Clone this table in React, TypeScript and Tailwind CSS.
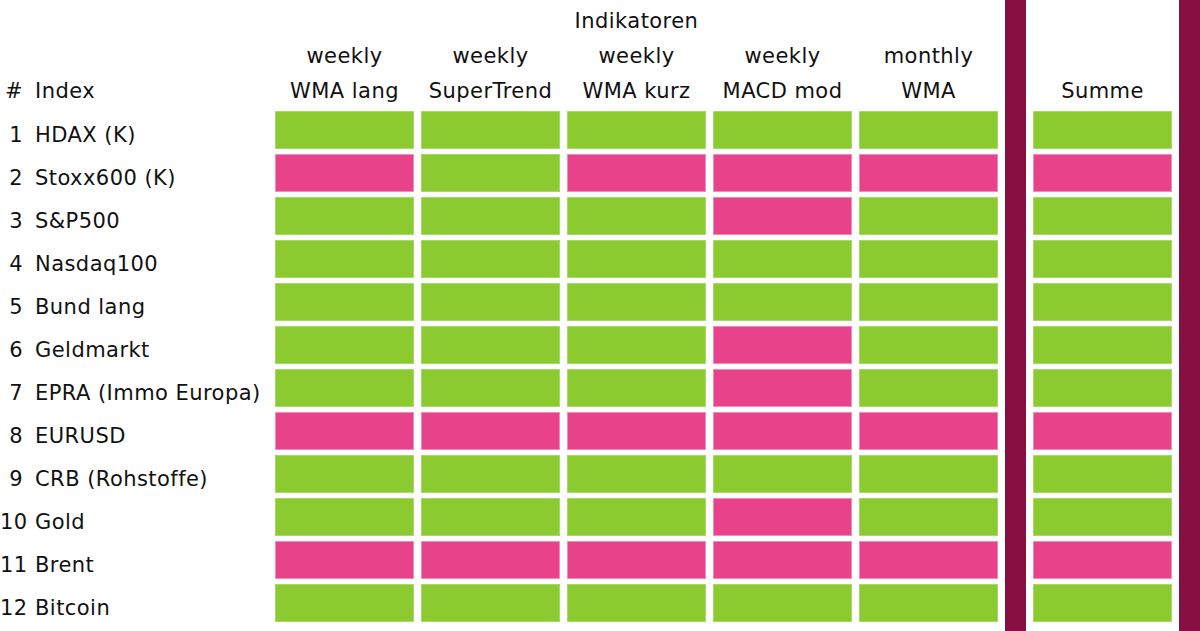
import React from 'react'

type Signal = 'g' | 'r'

type Row = {
	nr: number
	name: string
	cells: Signal[]
	sum: Signal
}

const rows: Row[] = [
	{ nr: 1, name: 'HDAX (K)', cells: ['g', 'g', 'g', 'g', 'g'], sum: 'g' },
	{ nr: 2, name: 'Stoxx600 (K)', cells: ['r', 'g', 'r', 'r', 'r'], sum: 'r' },
	{ nr: 3, name: 'S&P500', cells: ['g', 'g', 'g', 'r', 'g'], sum: 'g' },
	{ nr: 4, name: 'Nasdaq100', cells: ['g', 'g', 'g', 'g', 'g'], sum: 'g' },
	{ nr: 5, name: 'Bund lang', cells: ['g', 'g', 'g', 'g', 'g'], sum: 'g' },
	{ nr: 6, name: 'Geldmarkt', cells: ['g', 'g', 'g', 'r', 'g'], sum: 'g' },
	{ nr: 7, name: 'EPRA (Immo Europa)', cells: ['g', 'g', 'g', 'r', 'g'], sum: 'g' },
	{ nr: 8, name: 'EURUSD', cells: ['r', 'r', 'r', 'r', 'r'], sum: 'r' },
	{ nr: 9, name: 'CRB (Rohstoffe)', cells: ['g', 'g', 'g', 'g', 'g'], sum: 'g' },
	{ nr: 10, name: 'Gold', cells: ['g', 'g', 'g', 'r', 'g'], sum: 'g' },
	{ nr: 11, name: 'Brent', cells: ['r', 'r', 'r', 'r', 'r'], sum: 'r' },
	{ nr: 12, name: 'Bitcoin', cells: ['g', 'g', 'g', 'g', 'g'], sum: 'g' },
]

const columns = [
	['weekly', 'WMA lang'],
	['weekly', 'SuperTrend'],
	['weekly', 'WMA kurz'],
	['weekly', 'MACD mod'],
	['monthly', 'WMA'],
]

function Cell({ s }: { s: Signal }) {
	return (
		<div
			className={
				s === 'g'
					? 'bg-[#8bcb2f] border border-[#a6d86a]'
					: 'bg-[#e8438a] border border-[#f08db7]'
			}
		/>
	)
}

export default function App() {
	return (
		<div
			className="grid h-[631px] w-[1200px] bg-white text-[21px] tracking-[0.45px] text-[#111] grid-cols-[268px_repeat(5,139px)_21px_139px_21px] grid-rows-[106px_repeat(12,38px)_1fr] gap-x-[7px] gap-y-[5px]"
			style={{ fontFamily: '"DejaVu Sans", sans-serif' }}
		>
			{/* header */}
			<div className="col-start-1 row-start-1 self-end flex items-center leading-[35px] mb-[-3px]">
				<span className="w-[23px] text-right">#</span>
				<span className="ml-[12px]">Index</span>
			</div>
			<div className="col-start-2 col-span-5 row-start-1 self-start text-center leading-[35px] pt-[4px]">
				Indikatoren
			</div>
			{columns.map((c, i) => (
				<div
					key={i}
					className="row-start-1 self-end text-center leading-[35px] mb-[-3px] whitespace-nowrap"
					style={{ gridColumnStart: i + 2 }}
				>
					<div>{c[0]}</div>
					<div>{c[1]}</div>
				</div>
			))}
			<div className="col-start-8 row-start-1 self-end text-center leading-[35px] mb-[-3px]">Summe</div>

			{/* separators */}
			<div className="col-start-7 row-span-full bg-[#870f41]" />
			<div className="col-start-9 row-span-full bg-[#870f41]" />

			{rows.map((r, ri) => (
				<React.Fragment key={r.nr}>
					<div
						className="col-start-1 flex items-center whitespace-nowrap pt-[12px]"
						style={{ gridRowStart: ri + 2 }}
					>
						<span className="w-[23px] text-right">{r.nr}</span>
						<span className="ml-[12px]">{r.name}</span>
					</div>
					{r.cells.map((s, ci) => (
						<div
							key={ci}
							className="grid"
							style={{ gridRowStart: ri + 2, gridColumnStart: ci + 2 }}
						>
							<Cell s={s} />
						</div>
					))}
					<div className="col-start-8 grid" style={{ gridRowStart: ri + 2 }}>
						<Cell s={r.sum} />
					</div>
				</React.Fragment>
			))}
		</div>
	)
}
